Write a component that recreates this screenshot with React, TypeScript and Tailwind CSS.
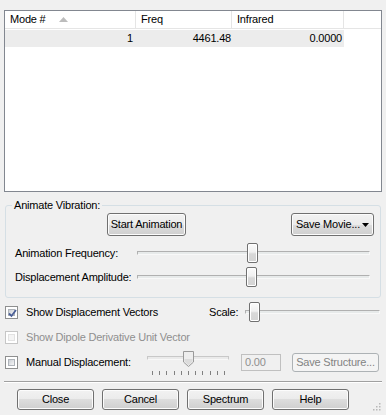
import React from "react"

function Button({ children, className = "", disabled = false }: { children: React.ReactNode; className?: string; disabled?: boolean }) {
  return (
    <div
      className={`flex items-center justify-center rounded-[3px] border ${
        disabled
          ? "border-[#adb2b5] bg-[#f4f4f4] text-[#838383]"
          : "border-[#707070] bg-[linear-gradient(#f2f2f2_0%,#ebebeb_50%,#dddddd_50%,#cfcfcf_100%)] text-black shadow-[inset_0_0_0_1px_#fcfcfc]"
      } ${className}`}
    >
      {children}
    </div>
  )
}

function CheckBox({ checked = false, disabled = false }: { checked?: boolean; disabled?: boolean }) {
  return (
    <div
      className={`w-[13px] h-[13px] border p-[2px] bg-white ${
        disabled ? "border-[#c6c6c6]" : "border-[#8e8f8f]"
      }`}
    >
      <div
        className={`relative w-full h-full border ${
          disabled
            ? "border-[#e2e2e2] bg-[#f4f4f4]"
            : "border-[#aeb3b9] bg-[linear-gradient(135deg,#cbcfd5,#f6f6f6)]"
        }`}
      >
        {checked && (
          <svg viewBox="0 0 9 9" className="absolute left-[-1px] top-[-1px] w-[9px] h-[9px]">
            <path d="M1 4.5 L3.5 7 L8 1" fill="none" stroke="#4a5f97" strokeWidth="1.8" />
          </svg>
        )}
      </div>
    </div>
  )
}

function Slider({ thumb, className = "" }: { thumb: number; className?: string }) {
  return (
    <div className={`relative h-[20px] flex items-center ${className}`}>
      <div className="w-full h-[4px] border border-[#b0b0b0] border-b-[#f8f8f8] border-r-[#f8f8f8] bg-[#e7eaea]" />
      <div
        className="absolute top-[0px] w-[11px] h-[20px] rounded-[2px] border border-[#707070] bg-[linear-gradient(#fbfbfb_0%,#f0f0f0_45%,#d8d8d8_55%,#d4d4d4_100%)] shadow-[inset_0_0_0_1px_#ffffff]"
        style={{ left: thumb }}
      />
    </div>
  )
}

export default function App() {
  const ticks = Array.from({ length: 11 }, (_, i) => i)

  return (
    <div className="w-[386px] h-[415px] bg-[#f0f0f0] pt-[10px] text-[11px] tracking-[-0.2px] text-black font-['Liberation_Sans',Arial,sans-serif] overflow-hidden">
      {/* Mode list */}
      <div className="mx-[4px] h-[182px] border border-[#828790] bg-white">
        <div className="flex h-[18px] border-b border-[#e5e5e5]">
          <div className="w-[131px] flex items-center pl-[5px] border-r border-[#e5e5e5]">
            Mode #
            <svg viewBox="0 0 9 5" className="ml-[13px] w-[9px] h-[5px]">
              <path d="M0 5 L4.5 0 L9 5 Z" fill="#bcbcbc" />
            </svg>
          </div>
          <div className="w-[96px] flex items-center pl-[5px] border-r border-[#e5e5e5]">Freq</div>
          <div className="w-[112px] flex items-center pl-[5px] border-r border-[#e5e5e5]">Infrared</div>
          <div className="flex-1" />
        </div>
        <div className="flex h-[17px] w-[339px] bg-[#ececec] mt-[1px]">
          <div className="w-[131px] flex items-center justify-end pr-[3px]">1</div>
          <div className="w-[97px] flex items-center justify-end pr-[2px]">4461.48</div>
          <div className="w-[111px] flex items-center justify-end pr-[2px]">0.0000</div>
        </div>
      </div>

      {/* Animate Vibration group */}
      <div className="relative ml-[5px] mr-[5px] mt-[13px] h-[93px] rounded-[3px] border border-[#d5dfe5] pt-[7px]">
        <div className="absolute left-[6px] top-[-7px] px-[2px] bg-[#f0f0f0] leading-[13px]">Animate Vibration:</div>
        <div className="flex h-[23px]">
          <Button className="ml-[101px] w-[79px]">Start Animation</Button>
          <Button className="ml-[105px] w-[83px]">
            Save Movie...
            <svg viewBox="0 0 7 4" className="ml-[2px] w-[7px] h-[4px]">
              <path d="M0 0 L7 0 L3.5 4 Z" fill="#000" />
            </svg>
          </Button>
        </div>
        <div className="flex items-center h-[24px] mt-[5px] pl-[9px]">
          <div className="w-[122px]">Animation Frequency:</div>
          <Slider thumb={110} className="w-[233px]" />
        </div>
        <div className="flex items-center h-[24px] pl-[9px]">
          <div className="w-[122px]">Displacement Amplitude:</div>
          <Slider thumb={109} className="w-[233px]" />
        </div>
      </div>

      {/* Options */}
      <div className="flex items-center h-[20px] mt-[4px] pl-[5px]">
        <CheckBox checked />
        <div className="ml-[8px] w-[183px]">Show Displacement Vectors</div>
        <div className="w-[36px]">Scale:</div>
        <Slider thumb={4} className="w-[135px]" />
      </div>
      <div className="flex items-center h-[20px] mt-[5px] pl-[5px]">
        <CheckBox disabled />
        <div className="ml-[8px] text-[#8f8f8f]">Show Dipole Derivative Unit Vector</div>
      </div>
      <div className="flex items-center h-[20px] mt-[5px] pl-[5px]">
        <CheckBox />
        <div className="ml-[8px] w-[121px]">Manual Displacement:</div>
        <div className="relative w-[82px] h-[20px] flex items-center">
          <div className="w-full h-[4px] border border-[#c8c8c8] border-b-[#f8f8f8] bg-[#eaeaea] -mt-[9px]" />
          <svg viewBox="0 0 11 16" className="absolute left-[36px] top-[-1px] w-[11px] h-[16px]">
            <path d="M0.5 0.5 H10.5 V11 L5.5 15.5 L0.5 11 Z" fill="#eeeeee" stroke="#9a9a9a" />
            <path d="M1.5 8 H9.5 V10.6 L5.5 14.2 L1.5 10.6 Z" fill="#dcdcdc" />
          </svg>
          <div className="absolute left-[5px] top-[19px] flex gap-[6.2px]">
            {ticks.map((t) => (
              <div key={t} className="w-[1px] h-[4px] bg-[#808080]" />
            ))}
          </div>
        </div>
        <div className="ml-[12px] w-[40px] h-[17px] border border-[#c0c0c0] bg-[#f0f0f0] text-[#8f8f8f] flex items-center pl-[3px]">
          0.00
        </div>
        <Button disabled className="ml-[11px] w-[87px] h-[19px]">Save Structure...</Button>
      </div>

      {/* Separator */}
      <div className="mx-[4px] mt-[9px] border-t border-[#a0a0a0] border-b border-b-white" />

      {/* Bottom buttons */}
      <div className="relative flex gap-[8px] pl-[17px] mt-[6px]">
        <Button className="w-[77px] h-[21px]">Close</Button>
        <Button className="w-[77px] h-[21px]">Cancel</Button>
        <Button className="w-[77px] h-[21px]">Spectrum</Button>
        <Button className="w-[77px] h-[21px]">Help</Button>
        <svg viewBox="0 0 9 9" className="absolute right-[5px] top-[13px] w-[9px] h-[9px]">
          {[
            [7, 1],
            [7, 4],
            [4, 4],
            [7, 7],
            [4, 7],
            [1, 7],
          ].map(([x, y], i) => (
            <rect key={i} x={x} y={y} width="1.5" height="1.5" fill="#b8b8b8" />
          ))}
        </svg>
      </div>
    </div>
  )
}
